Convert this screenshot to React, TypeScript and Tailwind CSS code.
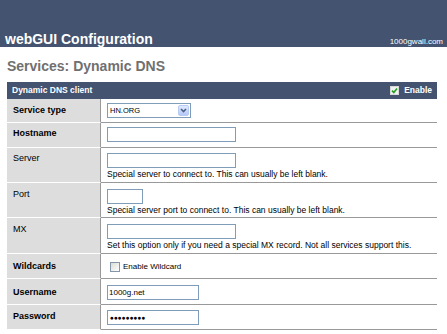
import React from "react";

function TextBox({ w, value }: { w: string; value?: string }) {
  return (
    <div className={`${w} h-[15px] border border-[#7f9db9] bg-white flex items-center pl-[1px] text-[8px] leading-[13px]`}>
      {value}
    </div>
  );
}

function Help({ children }: { children: React.ReactNode }) {
  return <div className="text-[8.5px] leading-[11px] mt-[1px] whitespace-nowrap">{children}</div>;
}

type Row = {
  label: string;
  bold: boolean;
  h: string;
  pt: string;
  lpt: string;
  content: React.ReactNode;
};

export default function App() {
  const rows: Row[] = [
    {
      label: "Service type",
      bold: true,
      h: "h-[24px]",
      pt: "pt-[4px]",
      lpt: "pt-[5px]",
      content: (
        <div className="w-[84px] h-[15px] border border-[#7f9db9] bg-white flex items-center justify-between pl-[2px] pr-[1px]">
          <span className="text-[7.5px] leading-[13px]">HN.ORG</span>
          <div className="w-[11px] h-[11px] rounded-[2px] bg-linear-to-b from-[#e1eafe] to-[#b4c8f6] border border-[#b8cbf4] flex items-center justify-center">
            <svg width="7" height="5" viewBox="0 0 7 5">
              <path d="M1 1 L3.5 3.6 L6 1" stroke="#4d6185" strokeWidth="1.6" fill="none" />
            </svg>
          </div>
        </div>
      ),
    },
    {
      label: "Hostname",
      bold: true,
      h: "h-[25px]",
      pt: "pt-[4px]",
      lpt: "pt-[4px]",
      content: <TextBox w="w-[129px]" />,
    },
    {
      label: "Server",
      bold: false,
      h: "h-[35px]",
      pt: "pt-[5px]",
      lpt: "pt-[4px]",
      content: (
        <>
          <TextBox w="w-[129px]" />
          <Help>Special server to connect to. This can usually be left blank.</Help>
        </>
      ),
    },
    {
      label: "Port",
      bold: false,
      h: "h-[35px]",
      pt: "pt-[6px]",
      lpt: "pt-[5px]",
      content: (
        <>
          <TextBox w="w-[36px]" />
          <Help>Special server port to connect to. This can usually be left blank.</Help>
        </>
      ),
    },
    {
      label: "MX",
      bold: false,
      h: "h-[36px]",
      pt: "pt-[6px]",
      lpt: "pt-[5px]",
      content: (
        <>
          <TextBox w="w-[129px]" />
          <Help>Set this option only if you need a special MX record. Not all services support this.</Help>
        </>
      ),
    },
    {
      label: "Wildcards",
      bold: true,
      h: "h-[25px]",
      pt: "pt-[8px]",
      lpt: "pt-[6px]",
      content: (
        <div className="flex items-center ml-[3px]">
          <div className="w-[10px] h-[10px] border border-[#8596a8] bg-linear-to-br from-[#dcdcd6] to-[#ffffff]" />
          <span className="ml-[3px] text-[8px] leading-[10px]">Enable Wildcard</span>
        </div>
      ),
    },
    {
      label: "Username",
      bold: true,
      h: "h-[26px]",
      pt: "pt-[6px]",
      lpt: "pt-[7px]",
      content: <TextBox w="w-[92px]" value="1000g.net" />,
    },
    {
      label: "Password",
      bold: true,
      h: "h-[25px]",
      pt: "pt-[5px]",
      lpt: "pt-[5px]",
      content: (
        <div className="w-[92px] h-[15px] border border-[#7f9db9] bg-white flex items-center pl-[2px] text-[6.5px] leading-[13px]">
          ●●●●●●●●●
        </div>
      ),
    },
  ];

  return (
    <div className="w-[447px] h-[334px] overflow-hidden bg-white font-['Liberation_Sans',Arial,sans-serif] text-black">
      <div className="h-[47px] bg-[#435370] flex items-end justify-between pl-[5px] pr-[4px]">
        <div className="text-[14px] leading-[16px] font-bold text-white">webGUI Configuration</div>
        <div className="text-[8px] leading-[10px] text-white">1000gwall.com</div>
      </div>
      <div className="ml-[7px] mt-[11px] h-[16px] text-[14px] leading-[16px] font-bold text-[#707070]">
        Services: Dynamic DNS
      </div>
      <div className="ml-[7px] mt-[8px] w-[430px]">
        <div className="h-[17px] bg-[#435370] flex items-center justify-between pl-[5px] pr-[5px] text-white font-bold text-[8.5px] leading-[11px]">
          <span>Dynamic DNS client</span>
          <span className="flex items-center">
            <svg width="9" height="9" viewBox="0 0 9 9" className="mr-[5px]">
              <rect x="0.5" y="0.5" width="8" height="8" fill="#f2f2f2" stroke="#d8d8d8" />
              <path d="M2 4.6 L3.8 6.5 L7 2.4" stroke="#22a022" strokeWidth="1.6" fill="none" />
            </svg>
            Enable
          </span>
        </div>
        {rows.map((r) => (
          <div key={r.label} className={`flex ${r.h}`}>
            <div
              className={`w-[94px] shrink-0 bg-[#dddddd] border-r border-r-[#999999] border-b border-b-white pl-[6px] ${r.lpt} text-[9px] leading-[12px] ${
                r.bold ? "font-bold" : "font-normal text-[8.7px]"
              }`}
            >
              {r.label}
            </div>
            <div className={`flex-1 border-b border-b-[#999999] pl-[6px] ${r.pt}`}>{r.content}</div>
          </div>
        ))}
      </div>
    </div>
  );
}
